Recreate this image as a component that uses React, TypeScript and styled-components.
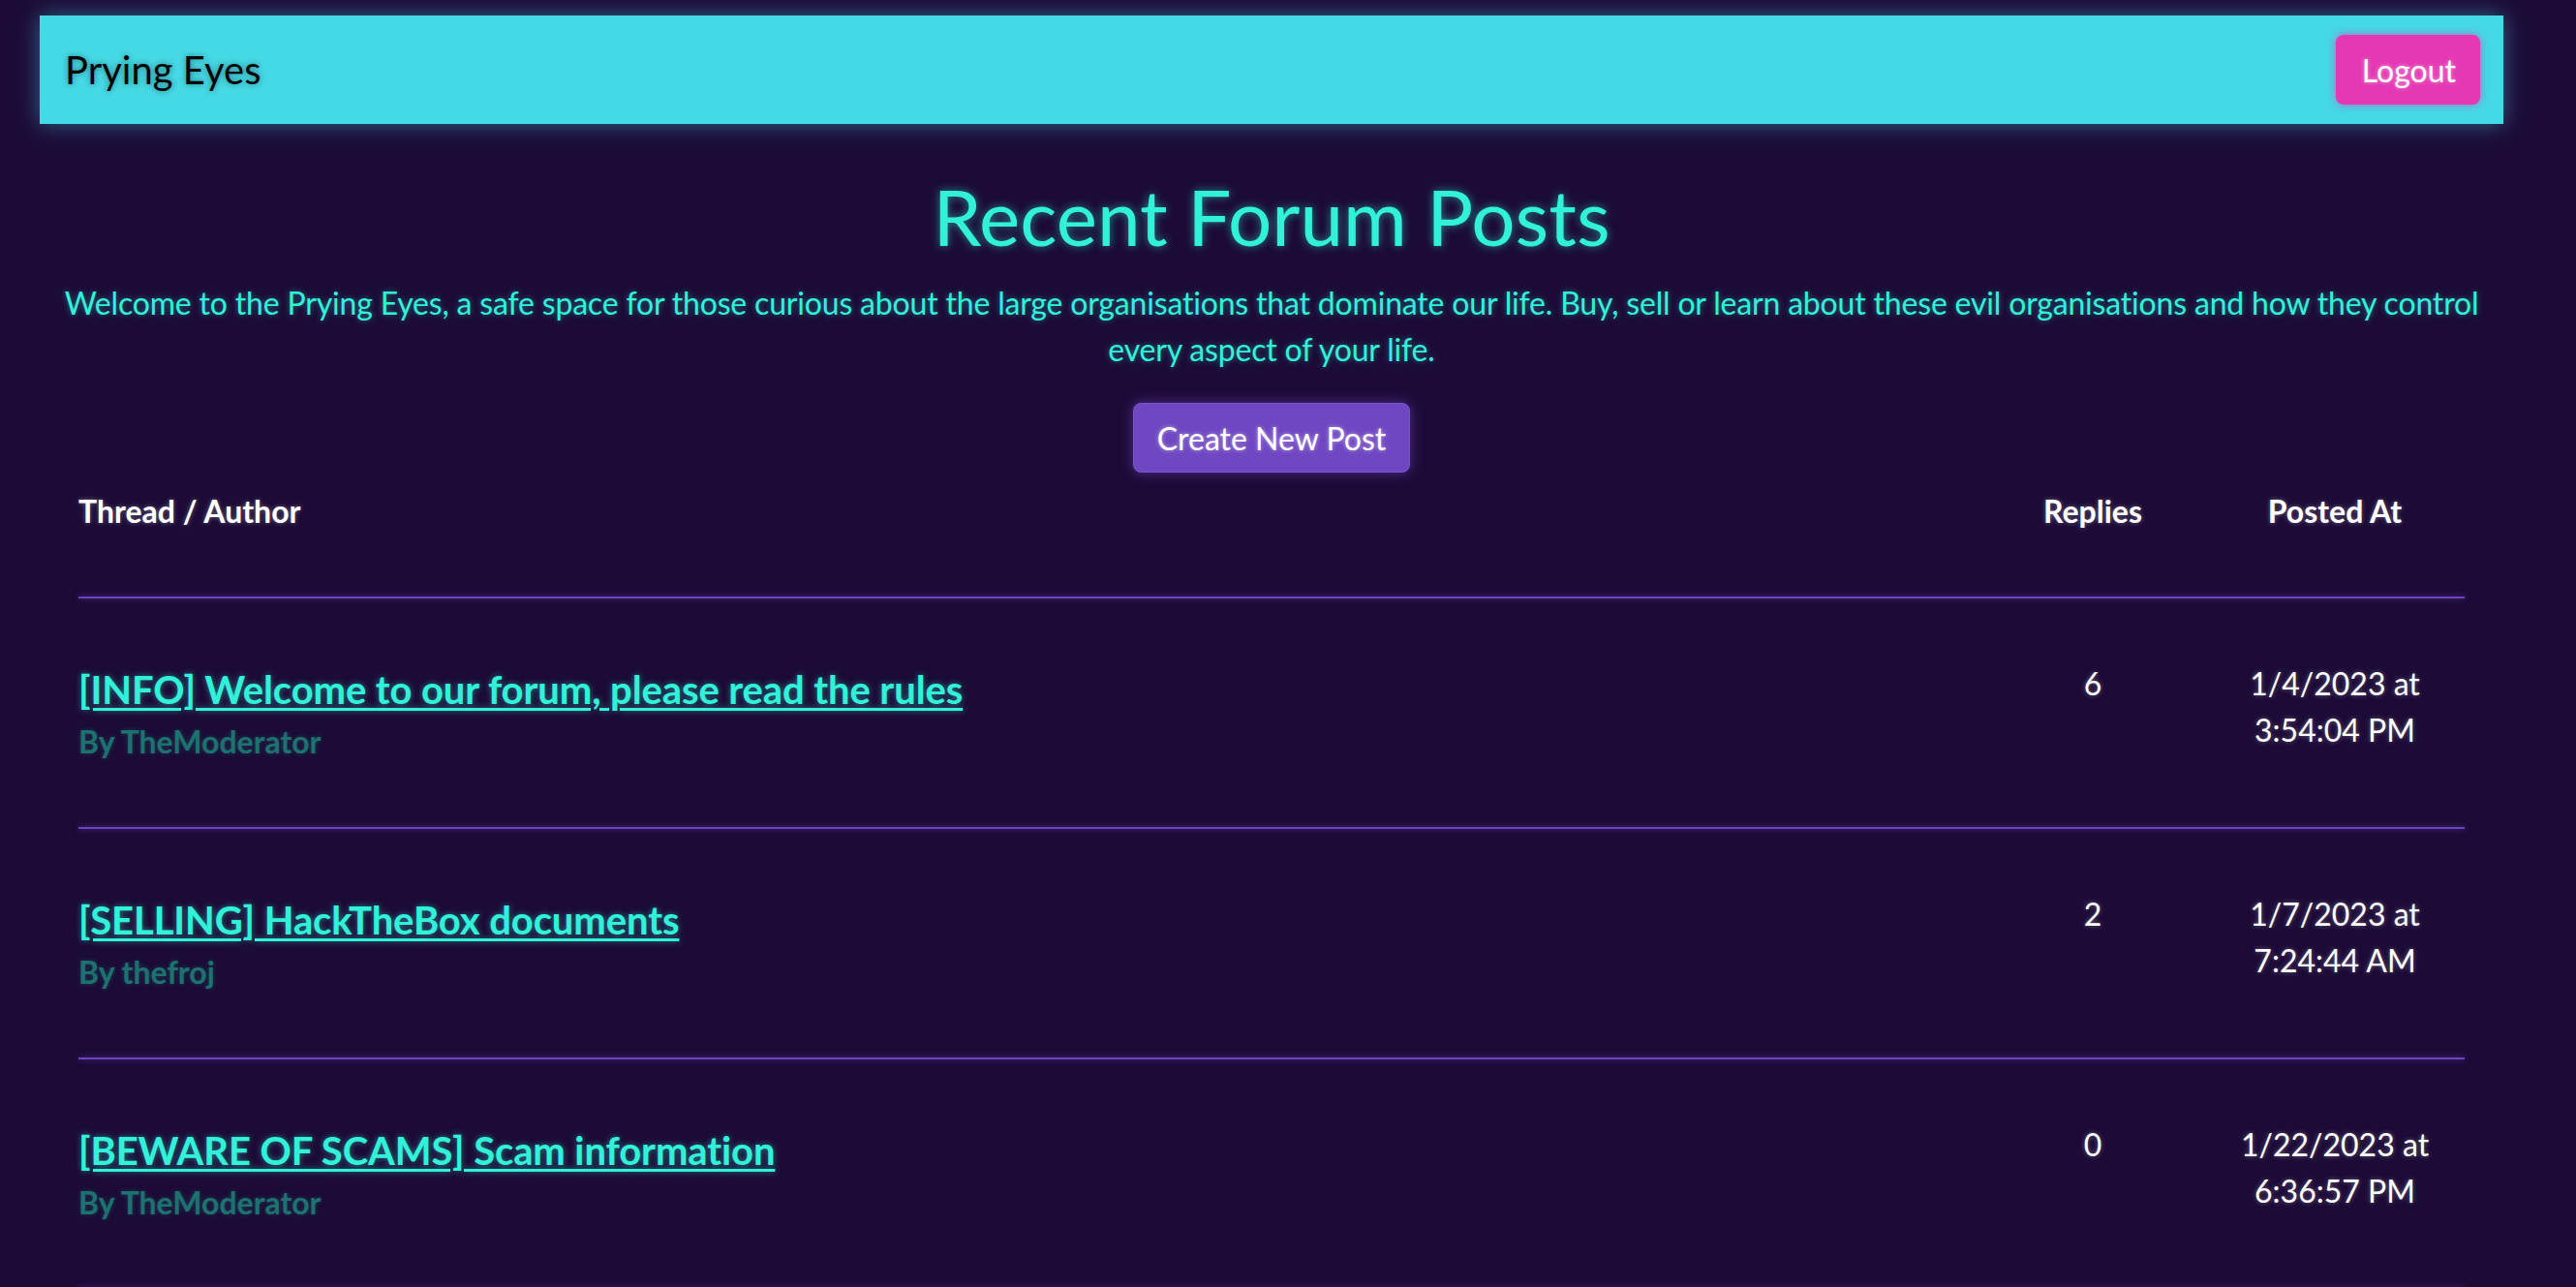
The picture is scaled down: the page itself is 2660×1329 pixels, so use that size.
import React from "react";
import styled, { createGlobalStyle } from "styled-components";

const GlobalStyle = createGlobalStyle`
    body {
        margin: 0;
        background: #1c0b37;
        font-family: Lato, "Open Sans", sans-serif;
    }
`;

const Page = styled.div`
    width: calc(100% - 34px);
    padding-bottom: 64px;
`;

const Navbar = styled.nav`
    margin: 16px 41px 0;
    height: 112px;
    padding: 0 24px 0 26px;
    box-sizing: border-box;
    display: flex;
    align-items: center;
    justify-content: space-between;
    background: #45d9e6;
    box-shadow: 0 0 22px rgba(69, 217, 230, 0.45);
`;

const Brand = styled.span`
    font-size: 40px;
    line-height: 60px;
    color: #050505;
    text-shadow: 0 0 6px rgba(0, 0, 0, 0.45);
`;

const LogoutButton = styled.button`
    height: 72px;
    padding: 0 25px 0 27px;
    border: none;
    border-radius: 8px;
    background: #e538b4;
    color: #fff;
    font-family: inherit;
    font-size: 32px;
    box-shadow: 0 0 8px rgba(229, 56, 180, 0.7);
    text-shadow: 0 0 4px rgba(255, 255, 255, 0.5);
`;

const Main = styled.main`
    margin: 47px 41px 0;
    text-align: center;
`;

const Title = styled.h1`
    margin: 0 0 18px;
    font-size: 80px;
    font-weight: 400;
    line-height: 96px;
    color: #31f2d9;
    text-shadow: 0 0 10px rgba(49, 242, 217, 0.55);
`;

const Intro = styled.p`
    margin: 0 0 31px;
    font-size: 32px;
    line-height: 48px;
    letter-spacing: -0.18px;
    color: #31f2d9;
    text-shadow: 0 0 6px rgba(49, 242, 217, 0.45);
`;

const CreateButton = styled.button`
    height: 72px;
    padding: 0 24px;
    border: 1px solid #7a52cc;
    border-radius: 8px;
    background: #7047c2;
    color: #fff;
    font-family: inherit;
    font-size: 32px;
    box-shadow: 0 0 14px rgba(112, 71, 194, 0.6);
    text-shadow: 0 0 4px rgba(255, 255, 255, 0.5);
`;

const Table = styled.div`
    margin-top: 16px;
    padding: 0 40px;
    text-align: left;
`;

const Row = styled.div<{ $head?: boolean }>`
    display: grid;
    grid-template-columns: 1fr 232px 268px;
    padding: ${(p) => (p.$head ? "0 0 64px" : "64px 0")};
    color: #fff;
    font-size: 32px;
    line-height: 48px;
    font-weight: ${(p) => (p.$head ? 700 : 400)};
    text-shadow: 0 0 5px rgba(255, 255, 255, 0.35);
`;

const Cell = styled.div<{ $center?: boolean }>`
    text-align: ${(p) => (p.$center ? "center" : "left")};
`;

const Divider = styled.div`
    height: 2px;
    background: #6f42c1;
    box-shadow: 0 0 6px rgba(111, 66, 193, 0.75);
`;

const ThreadLink = styled.a`
    display: inline-block;
    font-size: 40px;
    line-height: 60px;
    font-weight: 700;
    letter-spacing: -0.1px;
    color: #31f2d9;
    text-decoration: underline;
    text-decoration-thickness: 3px;
    text-underline-offset: 4px;
    text-shadow: 0 0 6px rgba(49, 242, 217, 0.5);
    cursor: pointer;
`;

const Author = styled.div`
    font-size: 32px;
    line-height: 48px;
    font-weight: 700;
    color: #1d7270;
    text-shadow: 0 0 5px rgba(30, 119, 115, 0.45);
`;

const posts = [
    {
        title: "[INFO] Welcome to our forum, please read the rules",
        author: "TheModerator",
        replies: 6,
        posted: "1/4/2023 at 3:54:04 PM",
    },
    {
        title: "[SELLING] HackTheBox documents",
        author: "thefroj",
        replies: 2,
        posted: "1/7/2023 at 7:24:44 AM",
    },
    {
        title: "[BEWARE OF SCAMS] Scam information",
        author: "TheModerator",
        replies: 0,
        posted: "1/22/2023 at 6:36:57 PM",
    },
];

export default function App() {
    return (
        <Page>
            <GlobalStyle />
            <Navbar>
                <Brand>Prying Eyes</Brand>
                <LogoutButton>Logout</LogoutButton>
            </Navbar>
            <Main>
                <Title>Recent Forum Posts</Title>
                <Intro>
                    Welcome to the Prying Eyes, a safe space for those curious about the large
                    organisations that dominate our life. Buy, sell or learn about these evil
                    organisations and how they control every aspect of your life.
                </Intro>
                <CreateButton>Create New Post</CreateButton>
                <Table>
                    <Row $head>
                        <Cell>Thread / Author</Cell>
                        <Cell $center>Replies</Cell>
                        <Cell $center>Posted At</Cell>
                    </Row>
                    {posts.map((post) => (
                        <React.Fragment key={post.title}>
                            <Divider />
                            <Row>
                                <Cell>
                                    <ThreadLink>{post.title}</ThreadLink>
                                    <Author>By {post.author}</Author>
                                </Cell>
                                <Cell $center>{post.replies}</Cell>
                                <Cell $center>{post.posted}</Cell>
                            </Row>
                        </React.Fragment>
                    ))}
                    <Divider />
                </Table>
            </Main>
        </Page>
    );
}
